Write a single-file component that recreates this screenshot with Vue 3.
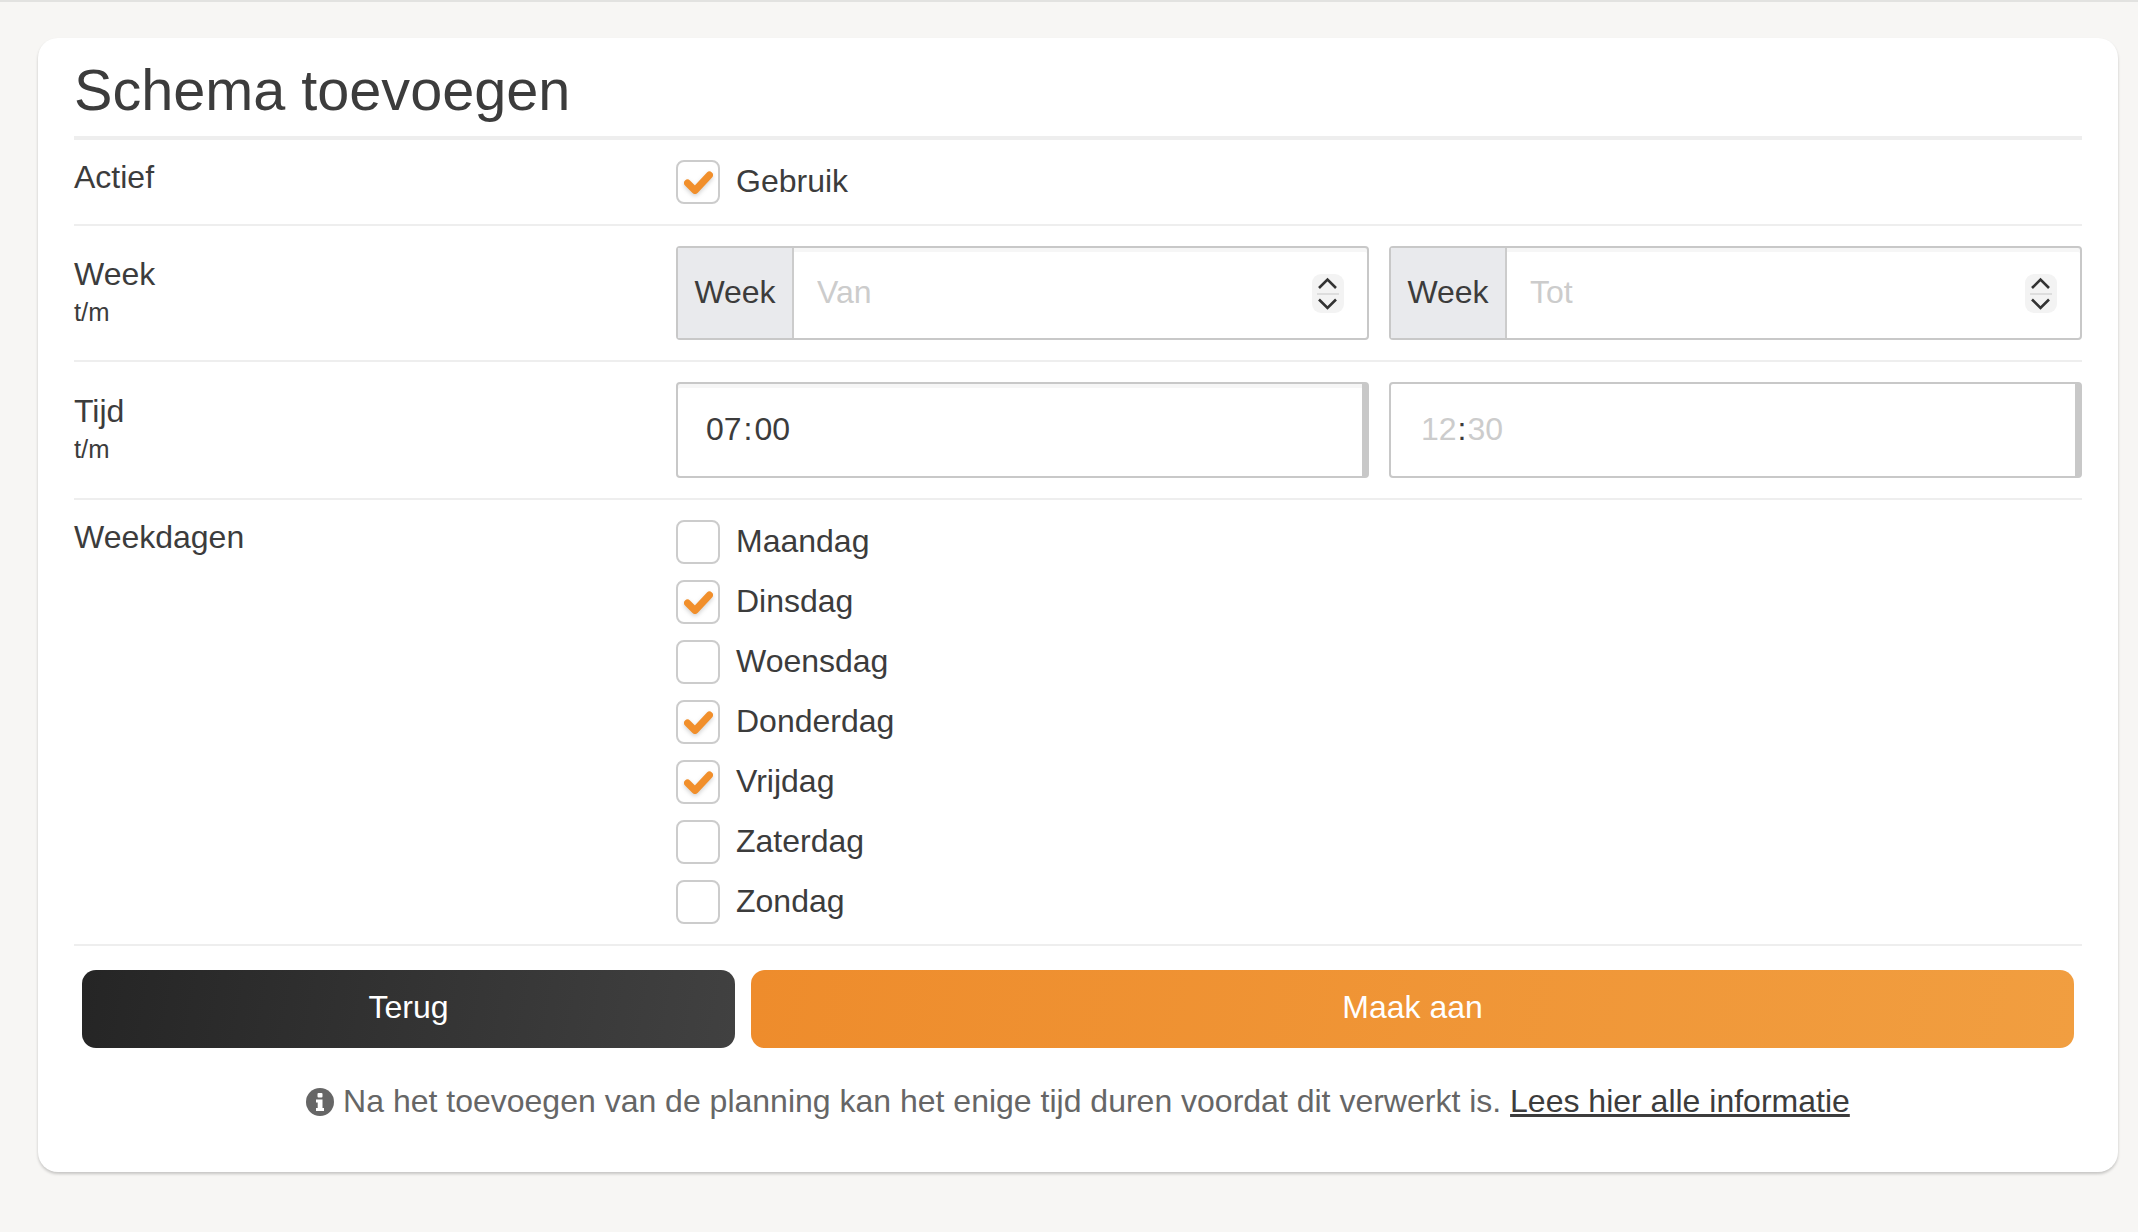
<script setup>
const days = [
  { name: 'Maandag', on: false },
  { name: 'Dinsdag', on: true },
  { name: 'Woensdag', on: false },
  { name: 'Donderdag', on: true },
  { name: 'Vrijdag', on: true },
  { name: 'Zaterdag', on: false },
  { name: 'Zondag', on: false },
]
</script>

<template>
  <div class="page">
    <main class="card">
      <h1 class="title">Schema toevoegen</h1>

      <section class="row">
        <div class="label">Actief</div>
        <div class="field">
          <label class="check">
            <span class="box">
              <svg class="tick" viewBox="0 0 44 44" width="44" height="44"><polyline points="11.5,23 19,30.5 33.5,15" /></svg>
            </span>
            <span class="check-text">Gebruik</span>
          </label>
        </div>
      </section>

      <section class="row">
        <div class="label double">Week<small>t/m</small></div>
        <div class="field pair">
          <div class="group" v-for="ph in ['Van', 'Tot']" :key="ph">
            <span class="addon">Week</span>
            <input class="num" :placeholder="ph" />
            <span class="stepper">
              <svg viewBox="0 0 32 39" width="32" height="39">
                <polyline class="chev" points="7,14 15.5,5.5 24,14" />
                <line class="div" x1="5" y1="20" x2="27" y2="20" />
                <polyline class="chev" points="7,25.5 15.5,34 24,25.5" />
              </svg>
            </span>
          </div>
        </div>
      </section>

      <section class="row">
        <div class="label double">Tijd<small>t/m</small></div>
        <div class="field pair">
          <div class="time inset"><span>07</span><i>:</i><span>00</span></div>
          <div class="time muted"><span>12</span><i>:</i><span>30</span></div>
        </div>
      </section>

      <section class="row">
        <div class="label">Weekdagen</div>
        <div class="field days">
          <label class="check" v-for="d in days" :key="d.name">
            <span class="box">
              <svg v-if="d.on" class="tick" viewBox="0 0 44 44" width="44" height="44"><polyline points="11.5,23 19,30.5 33.5,15" /></svg>
            </span>
            <span class="check-text">{{ d.name }}</span>
          </label>
        </div>
      </section>

      <div class="actions">
        <button class="btn dark">Terug</button>
        <button class="btn orange">Maak aan</button>
      </div>

      <p class="note">
        <svg class="info" viewBox="0 0 28 28" width="28" height="28">
          <circle cx="14" cy="14" r="14" fill="#666" />
          <rect x="11.5" y="5" width="5" height="4.5" rx="1" fill="#fff" />
          <path d="M10 11.5h6.5v8.5H18v3h-8v-3h1.7v-5.5H10z" fill="#fff" />
        </svg>
        Na het toevoegen van de planning kan het enige tijd duren voordat dit verwerkt is.
        <a href="#">Lees hier alle informatie</a>
      </p>
    </main>
  </div>
</template>

<style>
html, body { margin: 0; background: #f7f6f4; }
</style>

<style scoped>
.page {
  min-height: 1230px;
  border-top: 2px solid #e2e2e0;
  background: #f7f6f4;
  padding: 36px 20px 0 38px;
  font-family: "Liberation Sans", Arial, sans-serif;
  font-size: 32px;
  color: #3c3c3c;
}
.card {
  box-sizing: border-box;
  height: 1134px;
  background: #fff;
  border-radius: 20px;
  box-shadow: 0 2px 3px rgba(0, 0, 0, 0.2);
  padding: 0 36px;
}
.title {
  margin: 0;
  box-sizing: border-box;
  height: 102px;
  padding-top: 19px;
  font-size: 57.6px;
  line-height: 66px;
  font-weight: 400;
  border-bottom: 4px solid #eee;
}
.row {
  display: grid;
  grid-template-columns: 602px 1fr;
  border-bottom: 2px solid #eee;
  padding: 20px 0;
}
.label { line-height: 34px; }
.label.double { align-self: center; line-height: 38px; }
.label small { display: block; font-size: 25.6px; }
.field { min-width: 0; }
.pair { display: grid; grid-template-columns: 1fr 1fr; gap: 20px; }
.days { display: flex; flex-direction: column; gap: 16px; }
.check { display: flex; align-items: center; gap: 16px; height: 44px; }
.check-text { padding-bottom: 2px; }
.box {
  box-sizing: border-box;
  width: 44px;
  height: 44px;
  border: 2px solid #ccc;
  border-radius: 8px;
  flex: none;
  position: relative;
}
.tick { position: absolute; left: -2px; top: -2px; filter: drop-shadow(0 2px 2px rgba(0,0,0,0.18)); }
.tick polyline { fill: none; stroke: #f18f2b; stroke-width: 7; stroke-linecap: round; stroke-linejoin: round; }
.group {
  box-sizing: border-box;
  height: 94px;
  display: flex;
  align-items: center;
  border: 2px solid #c8c8c8;
  border-radius: 4px;
  box-shadow: inset 0 4px 0 #f6f6f6;
}
.addon {
  box-sizing: border-box;
  align-self: stretch;
  width: 116px;
  flex: none;
  display: flex;
  align-items: center;
  justify-content: center;
  padding-bottom: 2px;
  background: #e9eaed;
  border-right: 2px solid #ccc;
}
.num {
  flex: 1;
  min-width: 0;
  border: 0;
  outline: 0;
  background: transparent;
  padding: 0 0 2px 23px;
  font: inherit;
  color: inherit;
}
.num::placeholder { color: #ccc; opacity: 1; }
.stepper {
  flex: none;
  width: 32px;
  height: 39px;
  margin-right: 23px;
  background: #f3f3f3;
  border-radius: 9px;
}
.stepper svg { display: block; }
.chev { fill: none; stroke: #333; stroke-width: 2.6; }
.div { stroke: #ddd; stroke-width: 2; }
.time {
  box-sizing: border-box;
  height: 96px;
  display: flex;
  align-items: center;
  padding: 0 0 2px 28px;
  border: 2px solid #c8c8c8;
  border-right-width: 7px;
  border-radius: 4px;
}
.time.inset { box-shadow: inset 0 4px 0 #f6f6f6; }
.time i { font-style: normal; margin: 0 2px; }
.time.muted { padding-left: 30px; }
.time.muted i { margin: 0 1px; }
.time.muted span { color: #ccc; }
.actions {
  display: grid;
  grid-template-columns: 653px 1fr;
  gap: 16px;
  margin-top: 24px;
  padding: 0 8px;
}
.btn {
  height: 78px;
  border: 0;
  border-radius: 14px;
  padding: 0 0 3px;
  color: #fff;
  font: inherit;
}
.dark { background: linear-gradient(100deg, #252525, #414141); }
.orange { background: linear-gradient(100deg, #ee8c2c, #f19e40); }
.note {
  margin: 29px 0 0;
  text-align: center;
  line-height: 48px;
  color: #666;
}
.info { vertical-align: -4px; }
.note a { color: #3c3c3c; text-decoration: underline; }
</style>
